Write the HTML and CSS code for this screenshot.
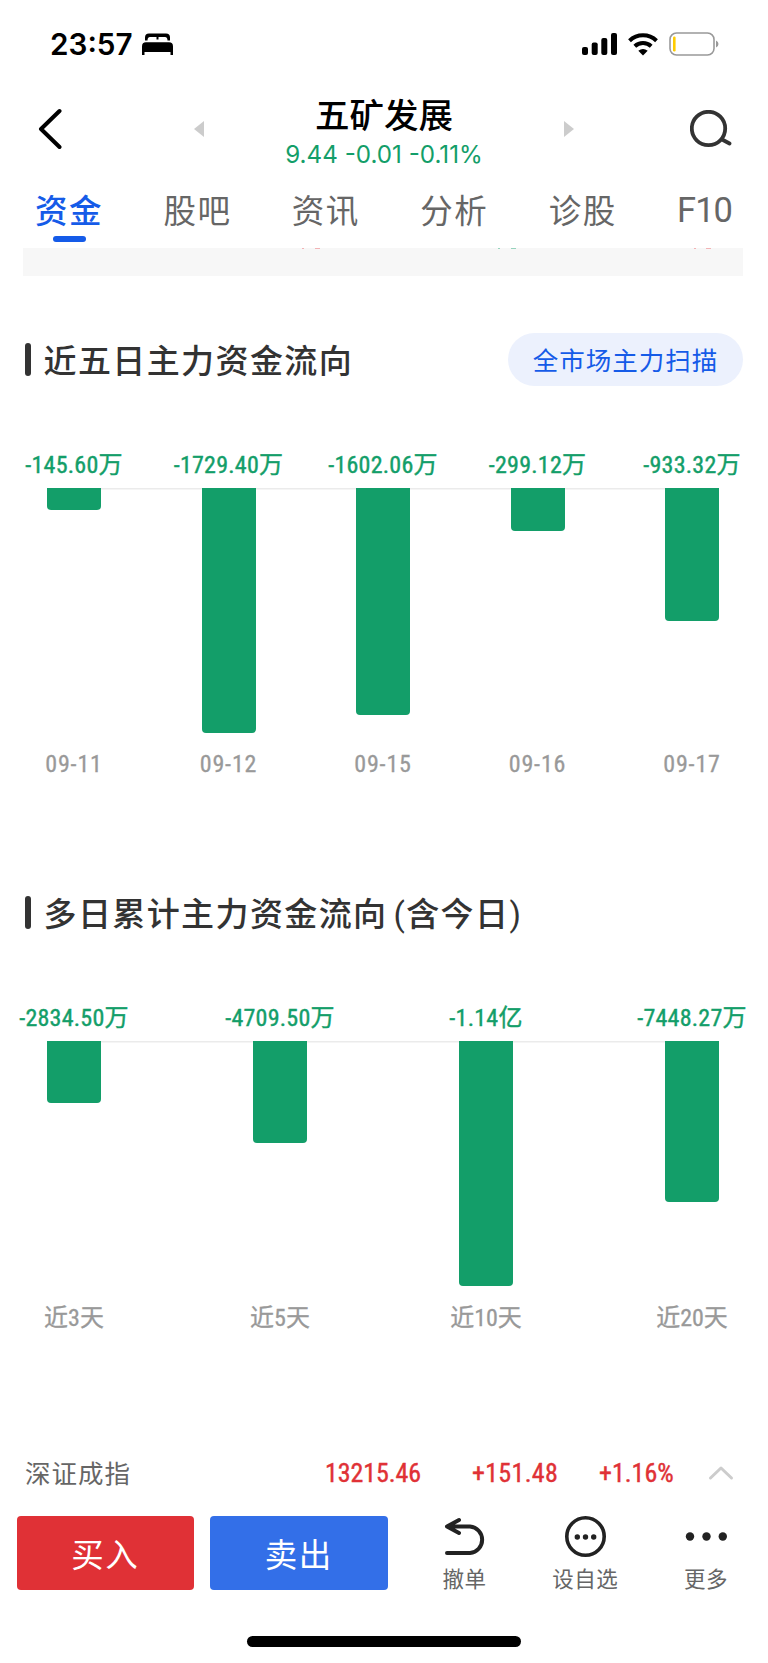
FILE: index.html
```html
<!DOCTYPE html>
<html lang="zh-CN">
<head>
  <meta charset="UTF-8" />
  <meta name="viewport" content="width=device-width, initial-scale=1.0"/>
  <title>五矿发展</title>
  <link rel="stylesheet" href="styles.css">
</head>
<body>
  <div class="status">
    <span class="time">23:57</span>
    <svg class="bed" width="31" height="22" viewBox="0 0 31 22">
      <path d="M3 7.500V4.500Q3 .5 7 .5H24Q28 .5 28 4.500V7.500H25.500Q25.500 4 23 4H16.500V6.500H14.500V4H8Q5.500 4 5.500 7.500Z"/>
      <path d="M0 22V13.500Q0 9.300 4 9.300H27Q31 9.300 31 13.500V22H28.500V19H2.500V22Z"/>
    </svg>
    <svg class="signal" width="35" height="22" viewBox="0 0 35 22">
      <rect x="0" y="14" width="6" height="8" rx="2"/>
      <rect x="9.700" y="9.500" width="6" height="12.500" rx="2"/>
      <rect x="19.300" y="5" width="6" height="17" rx="2"/>
      <rect x="29" y="0" width="6" height="22" rx="2"/>
    </svg>
    <svg class="wifi" width="30" height="23" viewBox="0 0 30 23">
      <path d="M1.500 7.800A19.500 19.500 0 0 1 28.500 7.800M6.800 13.200A12 12 0 0 1 23.200 13.200" fill="none" stroke="#000" stroke-width="4"/>
      <path d="M10.300 17.800Q15 14 19.700 17.800L15 22.500Z"/>
    </svg>
    <svg class="battery" width="50" height="24" viewBox="0 0 50 24">
      <rect x="1" y="1" width="44" height="22" rx="6.500" fill="none" stroke="#999" stroke-width="1.600"/>
      <rect x="4" y="4.500" width="2.600" height="15" rx="1.200" fill="#fc0"/>
      <path d="M47 8.500Q49.500 9.500 49.500 12T47 15.500Z" fill="#999"/>
    </svg>
  </div>

  <div class="header">
    <svg class="back" width="24" height="42" viewBox="0 0 24 42">
      <path d="M21.500 3 3 21 21.500 39" fill="none" stroke="#000" stroke-width="4" stroke-linecap="round" stroke-linejoin="round"/>
    </svg>
    <svg width="10" height="16" viewBox="0 0 10 16"><path d="M10 0V16L0 8Z" fill="#ccc"/></svg>
    <div class="stock">
      <h1>五矿发展</h1>
      <div class="quote">9.44 -0.01 -0.11%</div>
    </div>
    <svg width="10" height="16" viewBox="0 0 10 16"><path d="M0 0V16L10 8Z" fill="#ccc"/></svg>
    <svg class="search" width="42" height="38" viewBox="0 0 42 38">
      <circle cx="18.500" cy="18.500" r="16.700" fill="none" stroke="#333" stroke-width="3.800"/>
      <path d="M33 30 39.500 33.500" stroke="#333" stroke-width="3.800" stroke-linecap="round"/>
    </svg>
  </div>

  <div class="tabs">
    <div class="tab active">资金</div>
    <div class="tab">股吧</div>
    <div class="tab">资讯</div>
    <div class="tab">分析</div>
    <div class="tab">诊股</div>
    <div class="tab latin">F10</div>
  </div>
  <div class="band">
    <svg width="720" height="1" viewBox="0 0 720 1">
      <path d="M279 .5H281M292 .5H297M671 .5H673M683 .5H688" stroke="#f2b3b5"/>
      <path d="M475 .5H477M488 .5H493" stroke="#97d3bd"/>
    </svg>
  </div>

  <div class="section-title">
    <h2>近五日主力资金流向</h2>
    <button class="scan">全市场主力扫描</button>
  </div>
  <div class="chart">
    <div class="col"><div class="value">-145.60<i>万</i></div><div class="area"><div class="bar" style="height: 22px"></div></div><div class="label">09-11</div></div>
    <div class="col"><div class="value">-1729.40<i>万</i></div><div class="area"><div class="bar" style="height: 245px"></div></div><div class="label">09-12</div></div>
    <div class="col"><div class="value">-1602.06<i>万</i></div><div class="area"><div class="bar" style="height: 227px"></div></div><div class="label">09-15</div></div>
    <div class="col"><div class="value">-299.12<i>万</i></div><div class="area"><div class="bar" style="height: 43px"></div></div><div class="label">09-16</div></div>
    <div class="col"><div class="value">-933.32<i>万</i></div><div class="area"><div class="bar" style="height: 132.500px"></div></div><div class="label">09-17</div></div>
  </div>

  <div class="section-title second">
    <h2>多日累计主力资金流向<span class="paren open">(</span>含今日<span class="paren">)</span></h2>
  </div>
  <div class="chart days">
    <div class="col"><div class="value">-2834.50<i>万</i></div><div class="area"><div class="bar" style="height: 61.500px"></div></div><div class="label"><i>近</i>3<i>天</i></div></div>
    <div class="col"><div class="value">-4709.50<i>万</i></div><div class="area"><div class="bar" style="height: 102px"></div></div><div class="label"><i>近</i>5<i>天</i></div></div>
    <div class="col"><div class="value">-1.14<i>亿</i></div><div class="area"><div class="bar" style="height: 245px"></div></div><div class="label"><i>近</i>10<i>天</i></div></div>
    <div class="col"><div class="value">-7448.27<i>万</i></div><div class="area"><div class="bar" style="height: 160.500px"></div></div><div class="label"><i>近</i>20<i>天</i></div></div>
  </div>

  <div class="index">
    <span class="name">深证成指</span>
    <span class="num price">13215.46</span>
    <span class="num change">+151.48</span>
    <span class="num rate">+1.16%</span>
    <svg width="26" height="16" viewBox="0 0 26 16">
      <path d="M2.500 13 13 3 23.500 13" fill="none" stroke="#ccc" stroke-width="3" stroke-linecap="round" stroke-linejoin="round"/>
    </svg>
  </div>

  <div class="actions">
    <button class="buy">买入</button>
    <button class="sell">卖出</button>
    <div class="action undo">
      <svg width="42" height="42" viewBox="0 0 42 42">
        <path d="M15 4 3 10.500 15 17M3.500 10.500H26A13.300 13.300 0 0 1 26 37H3" fill="none" stroke="#222" stroke-width="4" stroke-linecap="round" stroke-linejoin="round"/>
      </svg>
      <span>撤单</span>
    </div>
    <div class="action watch">
      <svg width="42" height="42" viewBox="0 0 42 42">
        <circle cx="21.500" cy="20.500" r="18.700" fill="none" stroke="#222" stroke-width="3.600"/>
        <circle cx="13.300" cy="21" r="2.700"/><circle cx="21.500" cy="21" r="2.700"/><circle cx="29.700" cy="21" r="2.700"/>
      </svg>
      <span>设自选</span>
    </div>
    <div class="action more">
      <svg width="42" height="42" viewBox="0 0 42 42">
        <circle cx="5" cy="20.500" r="4.200"/><circle cx="21.500" cy="20.500" r="4.200"/><circle cx="37.800" cy="20.500" r="4.200"/>
      </svg>
      <span>更多</span>
    </div>
  </div>
  <div class="home"></div>
</body>
</html>
```
FILE: styles.css
```css
* {
  box-sizing: border-box;
}
body {
  margin: 0;
  width: 768px;
  height: 1663px;
  overflow: hidden;
  background: #fff;
  font-family: Inter, "Noto Sans CJK SC", sans-serif;
  display: flex;
  flex-direction: column;
}
svg {
  display: block;
  flex: none;
}
h1, h2 {
  margin: 0;
  font-weight: 500;
}
button {
  border: none;
  padding: 0;
  font-family: inherit;
}
i {
  font-style: normal;
  font-family: "Noto Sans CJK SC", sans-serif;
}

/* status bar */
.status {
  height: 88px;
  flex: none;
  padding: 0 49px 0 50px;
  display: flex;
  align-items: center;
}
.time {
  width: 92px;
  font-size: 29.700px;
  font-weight: 600;
}
.signal {
  margin-left: auto;
}
.wifi {
  margin: 0 11px;
}

/* header */
.header {
  height: 82px;
  flex: none;
  padding: 0 36px 0 38px;
  display: flex;
  align-items: center;
}
.back {
  margin-right: 132px;
}
.stock {
  width: 360px;
  padding-top: 6px;
  text-align: center;
}
.stock h1 {
  font-size: 34.500px;
  line-height: 44px;
}
.quote {
  font-size: 24.200px;
  line-height: 33px;
  color: #139e69;
}
.search {
  margin-left: auto;
}

/* tabs */
.tabs {
  height: 78px;
  flex: none;
  padding: 15px 36px 0 35px;
  display: flex;
  justify-content: space-between;
}
.tab {
  font-family: "Noto Sans CJK SC", sans-serif;
  font-size: 32.500px;
  letter-spacing: 1.500px;
  line-height: 48px;
  color: #666;
}
.tab.latin {
  padding-top: 1px;
  font-family: Roboto, sans-serif;
  font-size: 34.500px;
  letter-spacing: -1px;
}
.tab.active {
  color: #155be8;
  font-weight: 500;
}
.tab.active::after {
  content: "";
  display: block;
  width: 33px;
  height: 6px;
  margin: 3px auto 0;
  border-radius: 3px;
  background: #155be8;
}
.band {
  height: 28px;
  flex: none;
  margin: 0 25px 0 23px;
  background: #f7f7f7;
}

/* section titles */
.section-title {
  height: 53px;
  flex: none;
  margin: 57px 25px 0;
  display: flex;
  align-items: center;
}
.section-title::before {
  content: "";
  width: 6px;
  height: 33px;
  border-radius: 3px;
  background: #333;
}
.section-title h2 {
  margin-left: 12.500px;
  padding-bottom: 1px;
  font-family: "Noto Sans CJK SC", sans-serif;
  font-size: 33px;
  letter-spacing: 1.400px;
  line-height: 48px;
  color: #333;
}
.section-title.second {
  margin-top: 125px;
}
.section-title.second h2 {
  padding: 2px 0 0;
}
.paren {
  font-family: Roboto, sans-serif;
  font-weight: 400;
}
.paren.open {
  margin-left: 6px;
}
.scan {
  width: 235px;
  height: 53px;
  padding-bottom: 2px;
  margin-left: auto;
  border-radius: 27px;
  background: #ecf1fd;
  color: #155be8;
  font-size: 25.500px;
  letter-spacing: 1px;
}

/* bar charts */
.chart {
  flex: none;
  height: 310px;
  margin: 65px 49px 0 47px;
  display: flex;
  justify-content: space-between;
  background: linear-gradient(#ebebeb, #ebebeb) 0 37px / 100% 1.500px no-repeat;
}
.col {
  width: 54px;
  display: flex;
  flex-direction: column;
  align-items: center;
}
.value, .label {
  flex: none;
  height: 28px;
  line-height: 28px;
  white-space: nowrap;
  font-family: "Roboto Condensed", sans-serif;
  font-size: 24px;
}
.value {
  height: 24px;
  line-height: 24px;
  letter-spacing: 0.250px;
  color: #139e69;
  -webkit-text-stroke: 0.4px #139e69;
}
.label {
  letter-spacing: 0.800px;
  color: #999;
  -webkit-text-stroke: 0.3px #999;
}
.days .label {
  margin-top: -1px;
  letter-spacing: 0;
}
.area {
  flex: none;
  width: 54px;
  height: 245px;
  margin: 13px 0 17px;
}
.bar {
  border-radius: 0 0 4px 4px;
  background: #139e69;
}

/* index row */
.index {
  height: 40px;
  flex: none;
  margin-top: 139px;
  padding: 0 34px 0 25px;
  display: flex;
  align-items: center;
}
.name {
  width: 300px;
  padding-bottom: 4px;
  font-size: 25.500px;
  letter-spacing: 1px;
  color: #666;
}
.num {
  font-family: "Roboto Condensed", sans-serif;
  font-size: 26px;
  color: #e03136;
  -webkit-text-stroke: 0.4px #e03136;
}
.price {
  width: 147px;
  letter-spacing: -0.100px;
}
.change {
  width: 127px;
  letter-spacing: 0.300px;
}
.index svg {
  margin-left: auto;
}

/* bottom actions */
.actions {
  height: 80px;
  flex: none;
  margin-top: 23px;
  padding: 0 40px 0 16.500px;
  display: flex;
}
.buy, .sell {
  width: 177.500px;
  height: 74px;
  padding-bottom: 2px;
  margin-right: 16px;
  border-radius: 4px;
  color: #fff;
  font-size: 32.500px;
  letter-spacing: 1.500px;
}
.buy {
  background: #e03136;
}
.sell {
  background: #336fe8;
}
.action {
  display: flex;
  flex-direction: column;
  align-items: center;
  fill: #222;
}
.action span {
  margin-top: 6px;
  font-size: 21.500px;
  letter-spacing: 0.500px;
  line-height: 30px;
  color: #666;
}
.undo {
  margin-left: 39px;
}
.watch {
  margin-left: auto;
}
.more {
  margin-left: auto;
}

.home {
  width: 274px;
  height: 11px;
  flex: none;
  margin: 40px auto 0;
  border-radius: 6px;
  background: #000;
}
```
